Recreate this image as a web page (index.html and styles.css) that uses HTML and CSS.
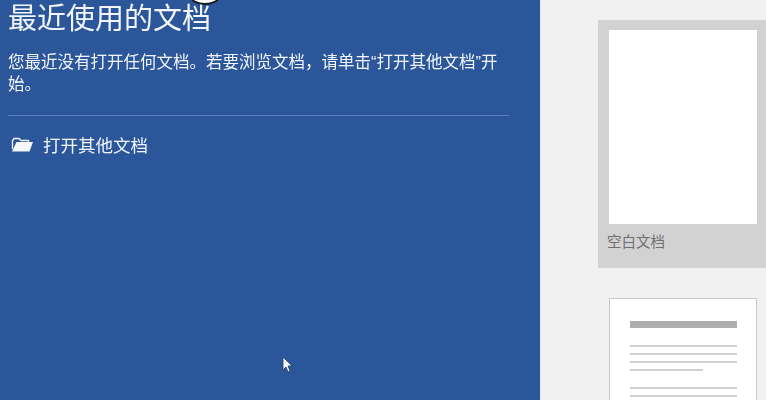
FILE: index.html
```html
<!DOCTYPE html>
<html lang="zh-CN">
<head>
<meta charset="utf-8">
<title>最近使用的文档</title>
<link rel="stylesheet" href="styles.css">
</head>
<body>
<div class="page">
  <aside class="recent">
    <h1 class="recent-title">最近使用的文档</h1>
    <p class="recent-text">您最近没有打开任何文档。若要浏览文档&#65292;请单击“打开其他文档”开始。</p>
    <hr class="divider">
    <div class="open-row">
      <svg class="folder" viewBox="0 0 22 16" aria-hidden="true">
        <path class="folder-back" d="M1.500 13V4.500L3 2.500h5l2 2h7.500v2"/>
        <path class="folder-front" d="M5.500 6H22l-3.500 9.500H1z"/>
      </svg>
      <span class="open-label">打开其他文档</span>
    </div>
    <div class="spot"></div>
    <svg class="cursor" viewBox="0 0 12 18" aria-hidden="true">
      <path d="M1 1v13l3-3 2 5 2-1-2-5h4z"/>
    </svg>
  </aside>
  <main class="templates">
    <div class="tile-selected">
      <div class="sheet sheet-blank"></div>
      <div class="tile-label">空白文档</div>
    </div>
    <div class="sheet sheet-doc">
      <div class="doc-head"></div>
      <div class="doc-group">
        <div class="doc-line"></div>
        <div class="doc-line"></div>
        <div class="doc-line"></div>
        <div class="doc-line doc-short"></div>
      </div>
      <div class="doc-group">
        <div class="doc-line"></div>
        <div class="doc-line"></div>
      </div>
    </div>
  </main>
</div>
</body>
</html>
```
FILE: styles.css
```css
* { box-sizing: border-box; }
html, body { margin: 0; height: 100%; overflow: hidden; }
body {
  background: #f1f1f1;
  font-family: "Liberation Sans", "Noto Sans CJK SC", sans-serif;
}
.page {
  display: flex;
  width: 766px;
  height: 400px;
  overflow: hidden;
  filter: blur(0.6px);
}
.recent {
  position: relative;
  flex: 0 0 540px;
  padding: 1px 31px 0 8px;
  background: #2b579a;
  color: #f2f5fa;
  box-shadow: 1px 0 0 #e4eaf4;
}
.recent-title {
  margin: 0;
  font-size: 29px;
  font-weight: 400;
  line-height: 36px;
  white-space: nowrap;
}
.recent-text {
  margin: 14px 0 0;
  font-size: 16.500px;
  line-height: 22px;
}
.divider {
  height: 1px;
  margin: 20px 0 0;
  border: 0;
  background: #5b82bb;
}
.open-row {
  display: flex;
  align-items: center;
  gap: 10px;
  height: 28px;
  margin-top: 14px;
  padding-left: 3px;
}
.folder { flex: none; width: 22px; height: 16px; }
.folder-back { fill: none; stroke: #f4f6fa; stroke-width: 1.300; }
.folder-front { fill: #f4f6fa; }
.open-label { font-size: 17.500px; white-space: nowrap; }
.spot {
  position: absolute;
  top: -12px;
  left: 190px;
  width: 30px;
  height: 17px;
  border: 2px solid #1a1a1a;
  border-radius: 50%;
  background: #fff;
}
.cursor {
  position: absolute;
  top: 356px;
  left: 282px;
  width: 12px;
  height: 18px;
  fill: #f6f8fb;
  stroke: #1f3d6e;
  stroke-width: 0.800;
}
.templates {
  flex: 1;
  min-width: 0;
  padding: 20px 0 0 58px;
}
.tile-selected {
  height: 248px;
  padding: 10px 0 0 11px;
  background: #d2d2d2;
}
.sheet {
  width: 148px;
  background: #fff;
  border: 1px solid #c8c8c8;
}
.sheet-blank { height: 194px; border: 0; }
.tile-label {
  margin: 8px 0 0 -2px;
  font-size: 14.500px;
  line-height: 20px;
  color: #707070;
  white-space: nowrap;
}
.sheet-doc {
  height: 140px;
  margin: 30px 0 0 11px;
  padding: 22px 19px 0 20px;
}
.doc-head { height: 7px; background: #aeaeae; }
.doc-group { display: flex; flex-direction: column; gap: 6px; margin-top: 17px; }
.doc-group + .doc-group { margin-top: 16px; }
.doc-line { height: 2px; background: #cfcfcf; }
.doc-short { width: 73px; }
```
